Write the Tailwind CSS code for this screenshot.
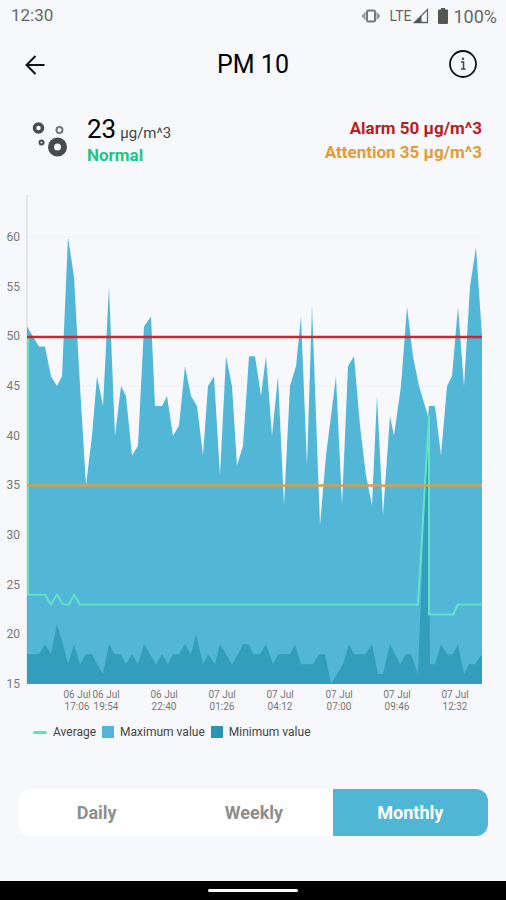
<!DOCTYPE html>
<html lang="en">
<head>
    <meta charset="UTF-8">
    <meta name="viewport" content="width=device-width, initial-scale=1.0">
    <title>PM 10</title>
    <script src="https://cdn.jsdelivr.net/npm/@tailwindcss/browser@4"></script>
</head>
<body class="bg-[#f7f8fc] font-[Roboto,sans-serif] text-black">
    <div class="flex min-h-screen flex-col">
        <!-- Status bar -->
        <div class="flex h-8 items-center justify-between pl-[11px] pr-[9px] text-[17px] text-[#666]">
            <span>12:30</span>
            <div class="flex items-center">
                <svg class="mr-2 h-4 w-5" viewBox="0 0 20 16">
                    <path d="M0.500 8L4.500 3.500v9zM19.500 8L15.500 3.500v9z" fill="#999"/>
                    <rect x="6" y="2.500" width="8" height="11" rx="1.500" fill="none" stroke="#777" stroke-width="2"/>
                </svg>
                <span class="text-[14px]">LTE</span>
                <svg class="ml-0.5 mr-2 h-4 w-4" viewBox="0 0 16 16">
                    <path d="M1.500 14.500H14.500V1.500Z" fill="none" stroke="#666" stroke-width="1.300"/>
                    <path d="M1 15H8.500V7.500Z" fill="#555"/>
                </svg>
                <svg class="mr-1 h-4 w-3" viewBox="0 0 12 16" fill="#555">
                    <path d="M4 0h4v1.500h2a1 1 0 0 1 1 1V15a1 1 0 0 1-1 1H2a1 1 0 0 1-1-1V2.500a1 1 0 0 1 1-1h2z"/>
                </svg>
                <span class="text-[18px]">100%</span>
            </div>
        </div>

        <!-- Header -->
        <header class="flex h-[66px] items-center justify-between px-6">
            <button type="button" aria-label="Back" class="w-9">
                <svg class="h-6 w-6" viewBox="0 0 24 24" fill="none" stroke="#111" stroke-width="2">
                    <path d="M20.500 12H2.500M11.500 3L2.500 12l9 9"/>
                </svg>
            </button>
            <h1 class="text-[25px]">PM 10</h1>
            <button type="button" aria-label="Information" class="flex w-9 justify-center">
                <svg class="h-8 w-8" viewBox="0 0 32 32" fill="none" stroke="#111">
                    <circle cx="15" cy="15" r="13" stroke-width="1.800"/>
                    <path d="M13 13h2.500v7M13 20h4.500" stroke="#444" stroke-width="1.500"/>
                    <circle cx="15" cy="9.800" r="1.200" fill="#444" stroke="none"/>
                </svg>
            </button>
        </header>

        <!-- Current reading -->
        <section class="mt-4 flex items-center justify-between px-6">
            <div class="flex items-center">
                <svg class="mr-[11px] h-[52px] w-[52px]" viewBox="0 0 52 52" fill="none" stroke="#4a4a4a">
                    <circle cx="14.500" cy="14" r="4" stroke-width="3.500"/>
                    <circle cx="35.500" cy="16" r="3" stroke-width="2" stroke="#777"/>
                    <circle cx="17.500" cy="28.500" r="2" stroke-width="2"/>
                    <circle cx="33.500" cy="33" r="6.500" stroke-width="6"/>
                </svg>
                <div class="pt-1">
                    <p class="leading-[22px]"><span class="text-[26px]">23</span> <span class="text-[15px] text-[#444]">µg/m^3</span></p>
                    <p class="text-[17px] font-bold leading-[22px] text-[#1fc684]">Normal</p>
                </div>
            </div>
            <div class="text-right text-[17px] font-bold leading-6">
                <p class="text-[#bc1b20]">Alarm 50 µg/m^3</p>
                <p class="text-[#e69a35]">Attention 35 µg/m^3</p>
            </div>
        </section>

        <!-- Chart -->
        <svg id="chart" class="mt-6 w-full" viewBox="0 0 506 526" role="img" aria-label="PM 10 history">
            <path d="M27 47H482M27 196H482" stroke="#f0f1f5"/>
            <path d="M27 5V494" stroke="#dfe1e5" stroke-width="1.500"/>
            <polygon id="max-area" fill="#52b6d7"/>
            <polygon id="min-area" fill="#329dbd"/>
            <polyline id="avg-line" fill="none" stroke="#62e2c8" stroke-width="2" stroke-linejoin="round"/>
            <path d="M27 147H482" stroke="#c42a30" stroke-width="2.500"/>
            <path d="M27 295.500H482" stroke="#dc9f48" stroke-width="2.500"/>
            <g id="y-labels" font-size="12" fill="#777" text-anchor="end"></g>
            <g id="x-labels" font-size="10" fill="#777" text-anchor="middle"></g>
        </svg>

        <!-- Legend -->
        <ul class="flex h-8 items-center pl-[33px] text-[12px] text-[#444]">
            <li class="flex items-center"><span class="mr-1.5 h-[3px] w-3.5 rounded-full bg-[#62e2b8]"></span>Average</li>
            <li class="ml-1.5 flex items-center"><span class="mr-1.5 h-3 w-3 bg-[#52b6d7]"></span>Maximum value</li>
            <li class="ml-1.5 flex items-center"><span class="mr-1.5 h-3 w-3 bg-[#2a95b5]"></span>Minimum value</li>
        </ul>

        <!-- Period tabs -->
        <div class="mx-[18px] mt-[41px] grid h-[47px] grid-cols-[157fr_157fr_155fr] rounded-xl bg-white text-[18px] font-bold text-[#8e8e8e]">
            <button type="button">Daily</button>
            <button type="button">Weekly</button>
            <button type="button" class="rounded-r-xl bg-[#50b6d6] text-white">Monthly</button>
        </div>

        <!-- Navigation bar -->
        <div class="mt-auto flex h-[19px] items-center justify-center bg-black">
            <span class="h-[3px] w-[90px] rounded-full bg-white"></span>
        </div>
    </div>

    <script>
        // [x, value] pairs
        const maximum = [[27,51],[33,50],[39,49],[45,49],[51,46],[57,45],[62,46],[68,60],[74,56],[80,45],[86,35],[92,40],[97,46],[103,43],[109,55],[115,40],[121,45],[126,44],[132,38],[138,39],[144,51],[151,52],[155,43],[162,43],[167,44],[173,40],[179,41],[185,47],[191,44],[197,43],[203,38],[208,45],[214,46],[220,36],[226,48],[232,45],[237,37],[243,39],[249,48],[255,48],[261,44],[266,48],[272,40],[278,46],[284,33],[290,45],[296,47],[301,52],[307,37],[312,53],[320,31],[326,38],[331,42],[336,46],[342,33],[348,47],[354,48],[360,41],[366,36],[372,33],[377,44],[383,32],[390,42],[394,40],[401,45],[407,53],[413,48],[419,45],[428,42],[429,43],[435,43],[441,38],[447,45],[452,46],[458,53],[464,45],[470,55],[476,59],[482,50]];
        const minimum = [[27,18],[39,18],[45,19],[51,18],[57,21],[63,19],[68,17],[74,19],[80,17],[86,18],[92,18],[97,17],[103,16],[109,19],[115,18],[121,18],[126,17],[132,18],[138,17],[144,19],[150,18],[156,17],[162,18],[168,17],[173,18],[179,18],[185,19],[191,18],[196,20],[203,17],[208,18],[215,17],[220,19],[226,18],[232,17],[238,18],[243,19],[249,19],[253,18],[260,18],[266,19],[273,17],[278,18],[290,18],[295,19],[301,17],[313,17],[319,18],[325,18],[331,15],[343,17],[349,19],[354,18],[365,18],[372,19],[378,16],[383,16],[390,19],[400,17],[406,18],[411,18],[418,16],[428,42],[430,17],[435,17],[441,19],[447,18],[453,18],[458,19],[464,16],[469,17],[475,17],[482,18]];
        const average = [[28,50],[28,24],[45,24],[51,23],[57,24],[63,23],[69,23],[74,24],[80,23],[418,23],[429,42],[429,22],[453,22],[458,23],[482,23]];
        const ticks = [[77,"06 Jul","17:06"],[106,"06 Jul","19:54"],[164,"06 Jul","22:40"],[222,"07 Jul","01:26"],[280,"07 Jul","04:12"],[339,"07 Jul","07:00"],[397,"07 Jul","09:46"],[455,"07 Jul","12:32"]];

        const toY = value => 494 - (value - 15) * 9.93;
        const toPoints = series => series.map(([x, value]) => `${x},${toY(value)}`).join(" ");

        document.getElementById("max-area").setAttribute("points", `27,494 ${toPoints(maximum)} 482,494`);
        document.getElementById("min-area").setAttribute("points", `27,494 ${toPoints(minimum)} 482,494`);
        document.getElementById("avg-line").setAttribute("points", toPoints(average));

        let yLabels = "";
        for (let value = 15; value <= 60; value += 5) {
            yLabels += `<text x="20" y="${toY(value) + 4}">${value}</text>`;
        }
        document.getElementById("y-labels").innerHTML = yLabels;
        document.getElementById("x-labels").innerHTML = ticks.map(([x, day, time]) =>
            `<text x="${x}" y="508">${day}</text><text x="${x}" y="520">${time}</text>`
        ).join("");
    </script>
</body>
</html>
